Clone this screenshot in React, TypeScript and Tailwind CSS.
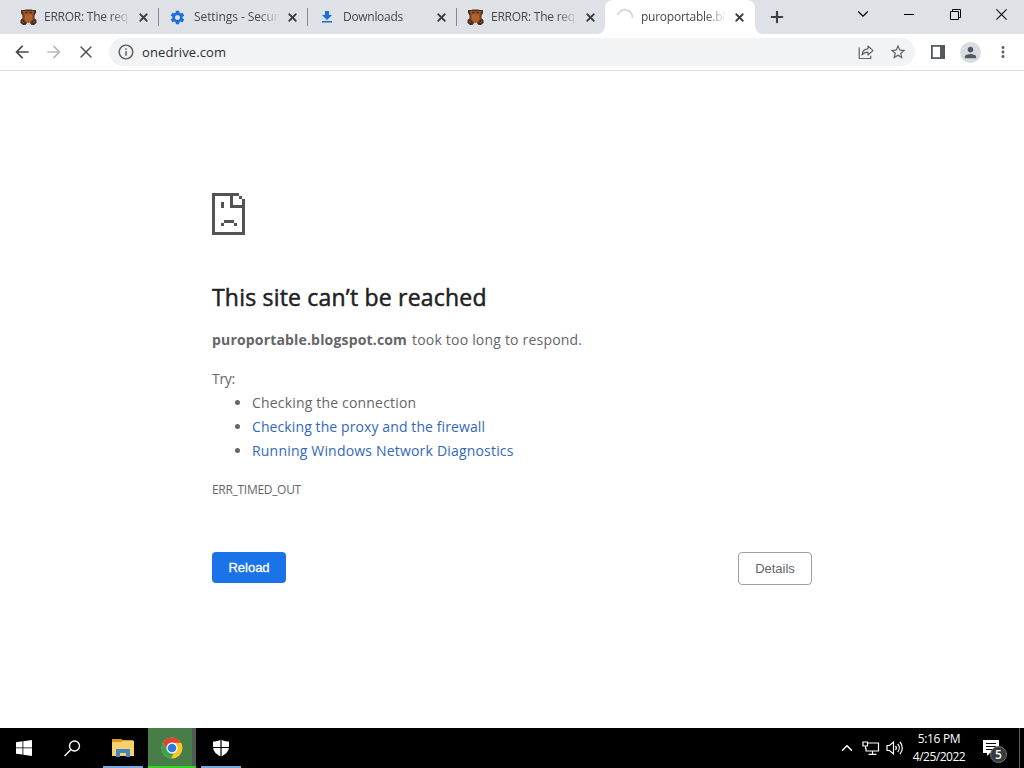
import type { ReactNode } from 'react';
import { clsx } from 'clsx';
import { X, Plus, ChevronDown, ChevronUp } from 'lucide-react';
import { MdSettings, MdInfoOutline, MdStarBorder, MdPerson, MdMoreVert, MdArrowBack, MdArrowForward } from 'react-icons/md';

function MascotIcon() {
  return (
    <svg className="mr-px shrink-0" width="17" height="17" viewBox="0 0 17 17">
      <path d="M1 1h3.500l1.500-.5h5l1.500.5H16v3l-1.500 2.500v3L16.500 11v3L14 16h-2.500l-1-1.500h-4L5.500 16H3L.5 14v-3l2-1.500v-3L1 4z" fill="#4a2f25" />
      <path d="M2.500 2h12l-1 3.500v5l-2.500 3H6l-2.500-3v-5z" fill="#98501f" />
      <path d="M5 5.500h7v5l-1.500 2h-4L5 10.500z" fill="#b0622c" />
      <path d="M5 3.500h2.500M9.500 3.500H12" stroke="#44291e" />
      <path d="M2 12l2 2M15 12l-2 2" stroke="#8e4822" />
      <path d="M7 13.500h3V16H7z" fill="#e6cfc2" />
    </svg>
  );
}

function DownloadIcon() {
  return (
    <svg width="16" height="16" viewBox="0 0 16 16" fill="#1a6fe0">
      <path d="M6 2h4v4h3l-5 5-5-5h3zM3 12h10v1.600H3z" />
    </svg>
  );
}

function SpinnerIcon() {
  return (
    <svg width="16" height="16" viewBox="0 0 16 16" fill="none">
      <path d="M.8 6A7.500 7.500 0 0 1 15.400 9" stroke="#cfd1d4" strokeWidth="1.600" />
    </svg>
  );
}

interface Tab {
  title: string;
  icon: ReactNode;
  active?: boolean;
  titleClass: string;
}

const tabs: Tab[] = [
  { title: 'ERROR: The req', icon: <MascotIcon />, titleClass: 'tracking-[-0.24px]' },
  { title: 'Settings - Secur', icon: <MdSettings size={17} color="#1a6fe0" />, titleClass: 'pl-px tracking-[-0.08px]' },
  { title: 'Downloads', icon: <DownloadIcon />, titleClass: 'pl-px tracking-[-0.3px]' },
  { title: 'ERROR: The req', icon: <MascotIcon />, titleClass: 'tracking-[-0.24px]' },
  { title: 'puroportable.bl', icon: <SpinnerIcon />, active: true, titleClass: 'pl-px tracking-[-0.25px]' },
];

function TabStrip() {
  return (
    <div className="flex h-[34px] bg-[#dee1e6] pl-[9px]">
      {tabs.map((tab, i) => (
        <div
          key={i}
          className={clsx(
            'relative flex h-[34px] items-center pl-[11px]',
            tab.active ? 'w-[150px] rounded-t-lg bg-white' : 'w-[149px]'
          )}
        >
          {tab.active && (
            <>
              <svg className="absolute bottom-0 -left-2" width="8" height="8" viewBox="0 0 8 8" fill="#fff">
                <path d="M8 0v8H0a8 8 0 0 0 8-8z" />
              </svg>
              <svg className="absolute -right-2 bottom-0" width="8" height="8" viewBox="0 0 8 8" fill="#fff">
                <path d="M0 0v8h8a8 8 0 0 1-8-8z" />
              </svg>
            </>
          )}
          <div className="flex w-[17px] shrink-0 justify-center">{tab.icon}</div>
          <div className="ml-[7px] w-[86px] shrink-0 [mask-image:linear-gradient(to_right,black_66px,transparent_86px)]">
            <span className={clsx('block text-[12px] leading-4 whitespace-nowrap text-[#45494d]', tab.titleClass)}>
              {tab.title}
            </span>
          </div>
          <X className="ml-[6.5px] shrink-0 text-[#3c4043]" size={13} strokeWidth={3.4} />
          {i < 3 && <div className="absolute top-2 -right-px h-[18px] w-px bg-[#85888c]" />}
        </div>
      ))}
      <div className="flex w-11 items-center justify-center">
        <Plus size={18} strokeWidth={2.9} className="text-[#3c4043]" />
      </div>
      <div className="ml-auto flex h-7 items-center text-black">
        <div className="flex w-[46px] justify-center">
          <ChevronDown size={18} strokeWidth={1.5} />
        </div>
        <div className="flex w-[46px] justify-center">
          <div className="h-px w-[10px] bg-black" />
        </div>
        <div className="flex w-[46px] justify-center">
          <svg width="11" height="11" viewBox="0 0 11 11" fill="none" stroke="#000">
            <path d="M.5 2.500h8v8h-8zM2.500 2.500v-2h8v8h-2" />
          </svg>
        </div>
        <div className="flex w-[46px] justify-center">
          <svg width="11" height="11" viewBox="0 0 11 11" fill="none" stroke="#000" strokeWidth="1.100">
            <path d="M.4.4l10.200 10.200M10.600.4L.4 10.600" />
          </svg>
        </div>
      </div>
    </div>
  );
}

function Toolbar() {
  return (
    <div className="flex h-[37px] items-center border-b border-[#dcdde0] bg-white pl-3 text-[#5f6368]">
      <MdArrowBack size={20} className="text-[#46494d]" />
      <MdArrowForward size={20} className="ml-3 text-[#b9bbbe]" />
      <X size={20} strokeWidth={1.8} className="ml-3 text-[#505357]" />
      <div className="ml-[13px] flex h-[28px] w-[806px] items-center rounded-full bg-[#f1f3f4] pl-2">
        <MdInfoOutline size={18} />
        <span className="ml-[7px] pt-px text-[13px] tracking-[0.1px] text-[#2c2f33]">onedrive.com</span>
        <svg className="ml-auto" width="16" height="16" viewBox="0 0 16 16" fill="none" stroke="#5f6368" strokeWidth="1.200" strokeLinejoin="round">
          <path d="M1.200 3.500v11h11.500v-2.700" />
          <path d="M4 11c.3-4 2.400-6 6-6.200V2l5 4.600-5 4.400V8.200C7.300 8.200 5.400 9 4 11z" />
        </svg>
        <MdStarBorder size={18} className="mr-2 ml-[15px]" />
      </div>
      <svg className="ml-4" width="14" height="14" viewBox="0 0 14 14">
        <path d="M0 0h14v14H0zM1.800 1.800v10.400H9V1.800z" fill="#55595e" fillRule="evenodd" />
      </svg>
      <div className="ml-[15px] flex size-[21px] items-center justify-center rounded-full bg-[#d9dde1]">
        <MdPerson size={17} className="text-[#505860]" />
      </div>
      <MdMoreVert size={18} className="ml-[13px]" />
    </div>
  );
}

function SadPageIcon() {
  return (
    <svg width="33" height="42" viewBox="0 0 33 42" fill="#535353" shapeRendering="crispEdges">
      <path d="M0 0h27v3H3v36h27V15H18V3h3v9h9V6h3v36H0z" />
      <path d="M27 3h3v3h-3zM9 9h3v6H9zM12 27h10v3H12zM9 30h3v3H9zM22 30h3v3h-3z" />
    </svg>
  );
}

function ErrorPage() {
  return (
    <main className="flex-1 pt-[122px] pl-[212px] text-[#646669]">
      <div className="w-[600px]">
        <SadPageIcon />
        <h1 className="mt-[45px] text-[23px] leading-[34px] tracking-[0.2px] text-[#202124] [-webkit-text-stroke:0.5px_#202124]">
          This site can’t be reached
        </h1>
        <p className="mt-[14px] text-[14px] leading-6">
          <strong className="tracking-[0.17px]">puroportable.blogspot.com</strong>
          <span className="ml-[5px] tracking-[0.2px]">took too long to respond.</span>
        </p>
        <p className="mt-[15px] text-[14px] leading-6 tracking-[-0.3px]">Try:</p>
        <ul className="list-disc pl-10 text-[14px] leading-6">
          <li className="tracking-[0.18px]">Checking the connection</li>
          <li className="tracking-[0.1px]">
            <a className="text-[#3268bd]">Checking the proxy and the firewall</a>
          </li>
          <li className="tracking-[0.19px]">
            <a className="text-[#3268bd]">Running Windows Network Diagnostics</a>
          </li>
        </ul>
        <p className="mt-[15px] text-[12px] leading-6 tracking-[-0.3px]">ERR_TIMED_OUT</p>
        <div className="mt-[50px] flex justify-between font-['Liberation_Sans',sans-serif] text-[13px]">
          <button className="h-[31px] w-[74px] rounded bg-[#1a73e8] text-white [-webkit-text-stroke:0.3px_white]">Reload</button>
          <button className="h-[33px] w-[74px] rounded border border-[#9aa0a6]">Details</button>
        </div>
      </div>
    </main>
  );
}

function Taskbar() {
  return (
    <footer className="flex h-10 bg-black text-white">
      <div className="flex w-12 items-center justify-center">
        <svg width="16" height="16" viewBox="0 0 16 16" fill="#fff">
          <path d="M0 2.300L6.500 1.300v6.200H0zM7.300 1.200L16 0v7.500H7.300zM0 8.300h6.500v6.300L0 13.700zM7.300 8.300H16V16l-8.700-1.300z" />
        </svg>
      </div>
      <div className="flex w-12 items-center justify-center">
        <svg width="17" height="17" viewBox="0 0 17 17" fill="none" stroke="#fff" strokeWidth="1.400">
          <circle cx="10.500" cy="6" r="5" />
          <path d="M7 9.500L.6 16" />
        </svg>
      </div>
      <div className="ml-[7px] flex w-10 items-center justify-center border-b-2 border-[#76a9dc] pt-px">
        <svg width="22" height="18" viewBox="0 0 22 18">
          <path d="M0 0h9l2 1h10v5H0z" fill="#d79b21" />
          <path d="M0 3h9l2-1h11v15H0z" fill="#f7d070" />
          <path d="M4 10h14v8h-4v-4H8v4H4z" fill="#4088c0" />
        </svg>
      </div>
      <div className="ml-[5px] flex w-12 border-b-2 border-[#35d424]">
        <div className="flex w-11 items-center justify-center bg-[#477e48] pt-px pl-[4px]">
          <svg width="22" height="22" viewBox="0 0 22 22">
            <circle cx="11" cy="11" r="10.500" fill="#fbc52d" />
            <path d="M1.900 5.800A10.500 10.500 0 0 1 20.100 5.800H11L6.500 13.600z" fill="#df4436" />
            <path d="M1.900 5.800L6.500 13.600A5 5 0 0 0 13 15.700L10 21.450A10.500 10.500 0 0 1 1.900 5.800z" fill="#39a353" />
            <circle cx="11" cy="11" r="5.500" fill="#fff" />
            <circle cx="11" cy="11" r="4.300" fill="#2c79de" />
          </svg>
        </div>
        <div className="w-1 bg-[#525b52]" />
      </div>
      <div className="ml-[5px] flex w-10 items-center justify-center border-b-2 border-[#76a9dc] pt-px">
        <svg width="18" height="18" viewBox="0 0 18 18">
          <path d="M9 .5c2.500 1.500 5 2 8 2v5c0 5-3.500 8-8 10-4.500-2-8-5-8-10v-5c3 0 5.500-.5 8-2z" fill="#fff" />
          <path d="M9 0v18M0 8.500h18" stroke="#000" strokeWidth="1.200" />
        </svg>
      </div>
      <div className="ml-auto flex items-center">
        <ChevronUp size={18} strokeWidth={2} />
        <svg className="ml-[6px]" width="18" height="16" viewBox="0 0 18 16" fill="none" stroke="#fff" strokeWidth="1.200">
          <path d="M6 3h10.500v8H4V8M10.500 11v3M6.500 14.400h8M1 2h4.500v4H1zM3.500 6v3" />
        </svg>
        <svg className="ml-[6px]" width="18" height="16" viewBox="0 0 18 16" fill="none" stroke="#fff" strokeWidth="1.200">
          <path d="M1 5.500h2.500L7.500 2v12L3.500 10.500H1zM9.500 6a3 3 0 0 1 0 4M11.700 4a6 6 0 0 1 0 8M14 2a9 9 0 0 1 0 12" />
        </svg>
        <div className="ml-[3px] w-[64px] text-center text-[12px] leading-[18px] whitespace-nowrap">
          <div className="tracking-[-0.35px]">5:16 PM</div>
          <div className="tracking-[-0.5px]">4/25/2022</div>
        </div>
        <div className="relative ml-3 h-10 w-9">
          <svg className="absolute top-3 left-0" width="17" height="17" viewBox="0 0 17 17">
            <path d="M0 0h16v13H7l-3 3v-3H0z" fill="#fff" />
            <path d="M3 3.500h10M3 6.500h10M3 9.500h7" stroke="#000" />
          </svg>
          <div className="absolute top-[18px] left-[7px] flex size-[17px] items-center justify-center rounded-full border border-[#73777a] bg-[#383b3e] text-[12px] font-semibold">
            5
          </div>
        </div>
        <div className="h-10 w-[5px] border-l border-[#606060]" />
      </div>
    </footer>
  );
}

export default function App() {
  return (
    <div className="flex h-[768px] w-[1024px] flex-col overflow-hidden bg-white font-['Open_Sans','Noto_Sans',sans-serif]">
      <TabStrip />
      <Toolbar />
      <ErrorPage />
      <Taskbar />
    </div>
  );
}
